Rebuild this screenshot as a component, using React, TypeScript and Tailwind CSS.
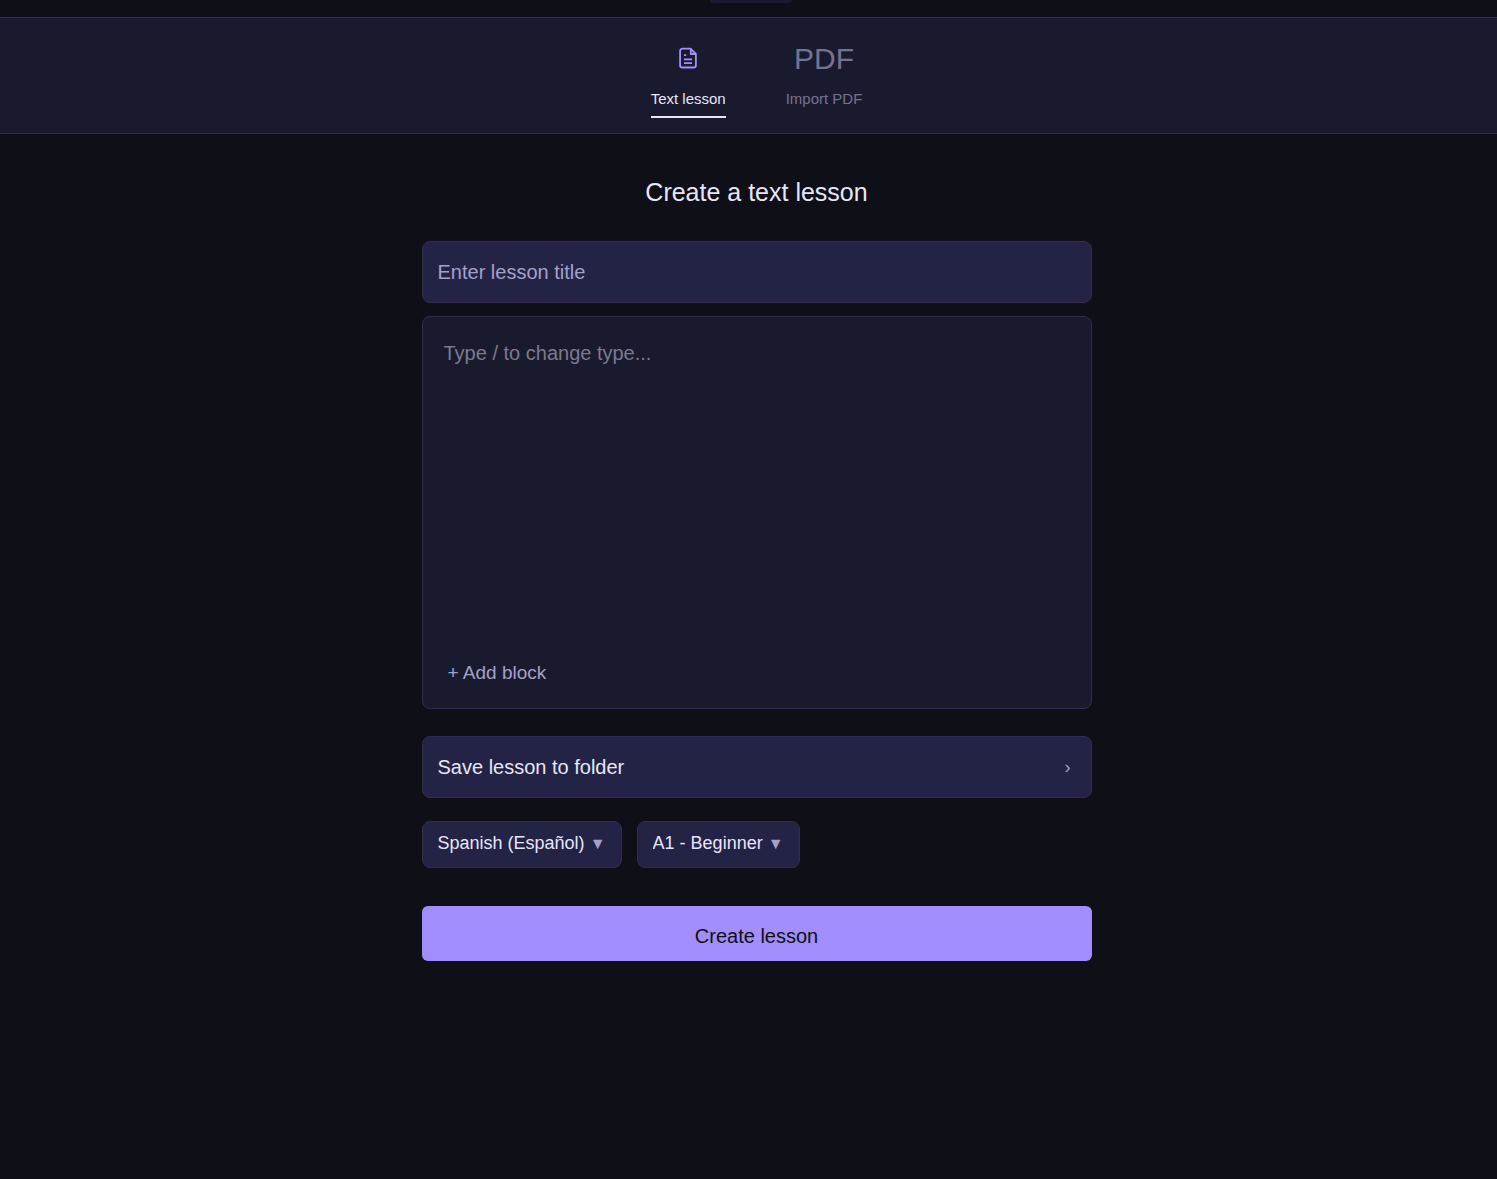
import { useState } from 'react'

interface PickerProps {
  label: string
  options: string[]
}

function DocumentIcon() {
  return (
    <svg
      width="24"
      height="24"
      viewBox="0 0 24 24"
      fill="none"
      stroke="currentColor"
      strokeWidth="1.8"
      strokeLinejoin="round"
      aria-hidden="true"
    >
      <path d="M14.5 2.6H6.4A2.3 2.3 0 0 0 4.1 5v14.2a2.3 2.3 0 0 0 2.3 2.3h11.2a2.3 2.3 0 0 0 2.3-2.3V8Z" />
      <path d="M14.8 2.6V8h5.1" />
      <path d="M8 9.2h2.2M8 13.4h8M8 17.2h8" />
    </svg>
  )
}

function Picker({ label, options }: PickerProps) {
  return (
    <div className="relative">
      <select
        aria-label={label}
        className="block appearance-none rounded-lg border border-[#2f2d52] bg-[#232345] pt-[9px] pb-[11px] pr-9 pl-[15px] text-[18px] leading-[25px] text-[#e6e6fa] [field-sizing:content]"
      >
        {options.map((option) => (
          <option key={option}>{option}</option>
        ))}
      </select>
      <span
        aria-hidden="true"
        className="pointer-events-none absolute inset-y-0 right-4 flex items-center pb-[2px] text-[16px] text-[#a3a1c8]"
      >
        ▼
      </span>
    </div>
  )
}

export default function App() {
  const [title, setTitle] = useState('')
  const [body, setBody] = useState('')

  return (
    <div className="min-h-screen bg-[#0f0f17] font-['Liberation_Sans',Arial,sans-serif] text-[#e6e6fa]">
      {/* Bottom edge of the collapsed menu */}
      <div className="flex h-[17px] justify-center pl-1">
        <div className="h-[3px] w-[82px] rounded-b-md bg-[#1a1a2e]" />
      </div>

      {/* Lesson type tabs */}
      <nav className="flex justify-center gap-[60px] border-y border-[#2f2d52] bg-[#1a1a2e] pt-5 pb-[15px] pl-4">
        <button type="button" className="flex flex-col items-center">
          <span className="flex h-10 items-center text-[#a28eff]">
            <DocumentIcon />
          </span>
          <span className="border-b-2 border-[#e6e6fa] pt-[10px] pb-[6px] text-[15px] leading-[22px]">Text lesson</span>
        </button>
        <button type="button" className="flex flex-col items-center text-[#757391]">
          <span className="flex h-10 items-center text-[30px]">PDF</span>
          <span className="border-b-2 border-transparent pt-[10px] pb-[6px] text-[15px] leading-[22px]">Import PDF</span>
        </button>
      </nav>

      <main className="pl-4">
        <form className="mx-auto flex max-w-[670px] flex-col" onSubmit={(e) => e.preventDefault()}>
          <h1 className="mt-10 mb-[31px] text-center text-[25px] leading-9">Create a text lesson</h1>

          <input
            type="text"
            aria-label="Lesson title"
            placeholder="Enter lesson title"
            value={title}
            onChange={(e) => setTitle(e.target.value)}
            className="w-full rounded-lg border border-[#2f2d52] bg-[#232345] px-[15px] py-4 text-[20px] leading-7 placeholder:text-[#a3a1c8]"
          />

          {/* Block editor */}
          <div className="mt-[13px] flex flex-col rounded-lg border border-[#2f2d52] bg-[#1a1a2e] px-[21px] pt-5 pb-[15px]">
            <textarea
              aria-label="Lesson text"
              placeholder="Type / to change type..."
              value={body}
              onChange={(e) => setBody(e.target.value)}
              className="h-[316px] resize-none text-[20px] leading-8 placeholder:text-[#7b7a8c]"
            />
            <button type="button" className="self-start px-1 py-2 text-[19px] leading-6 text-[#a3a1c8]">
              + Add block
            </button>
          </div>

          <button
            type="button"
            className="mt-[27px] flex items-center justify-between rounded-lg border border-[#2f2d52] bg-[#232345] py-4 pr-5 pl-[15px] text-[20px] leading-7"
          >
            <span>Save lesson to folder</span>
            <span className="text-[18px] text-[#a3a1c8]">›</span>
          </button>

          <div className="mt-[23px] flex gap-[15px]">
            <Picker label="Language" options={['Spanish (Español)']} />
            <Picker label="Level" options={['A1 - Beginner']} />
          </div>

          <button
            type="submit"
            className="mt-[38px] rounded-md bg-[#a28eff] pt-4 pb-[11px] text-[20px] leading-7 text-[#0f0f17]"
          >
            Create lesson
          </button>
        </form>
      </main>
    </div>
  )
}
